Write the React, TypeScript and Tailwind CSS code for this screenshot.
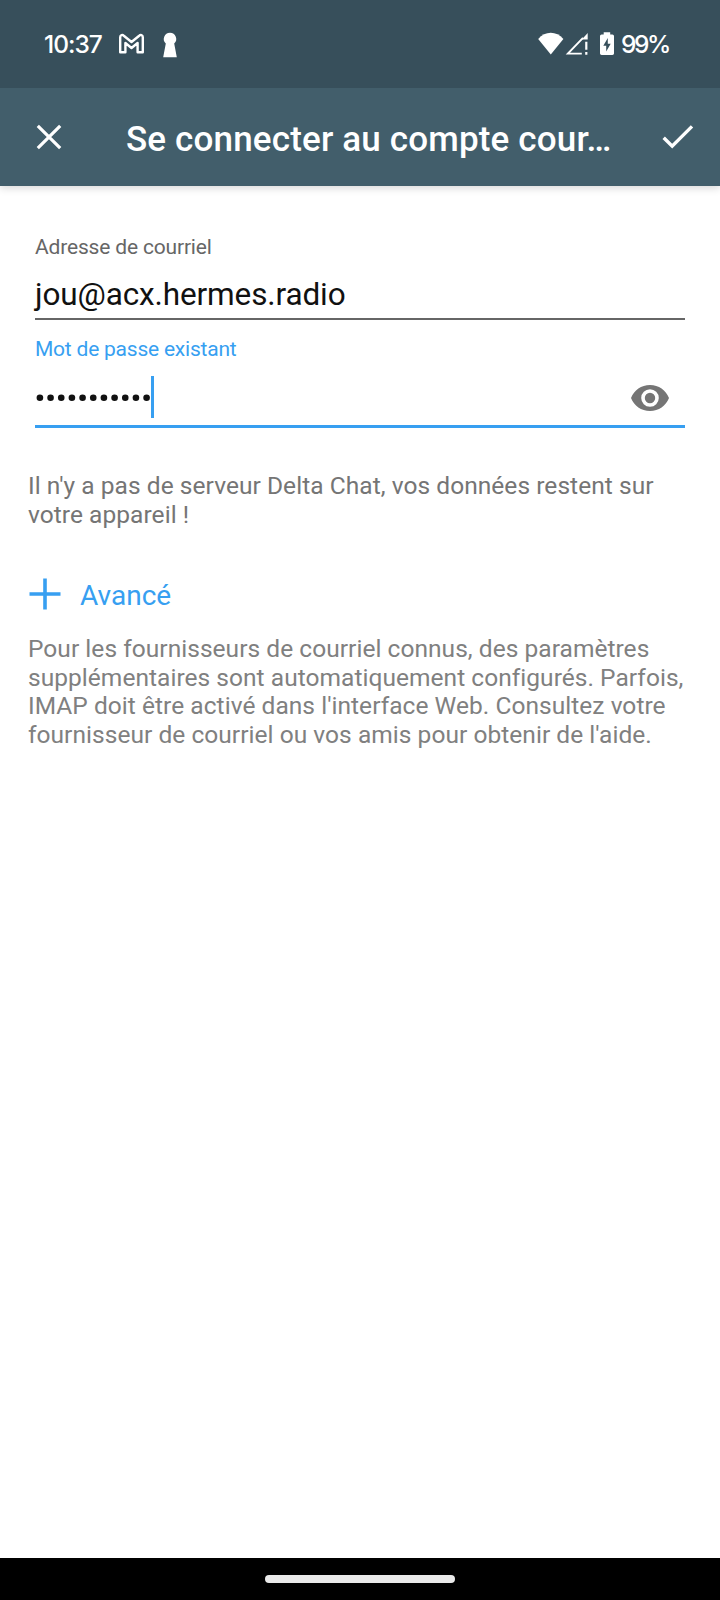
import React from "react";

function StatusBar() {
  return (
    <div className="relative z-10 flex h-[88px] items-center bg-[#374f5b] pl-[44px] pr-[51px] text-white">
      <span className="w-[60px] whitespace-nowrap font-['Inter'] text-[24.5px] font-medium leading-[30px] tracking-[-1px]">10:37</span>
      <svg className="ml-[14px] h-[22px] w-[28px]" viewBox="0 0 28 22" fill="none" stroke="white" strokeWidth="2.4" strokeLinejoin="round">
        <path d="M2.2 19.3V4.2C2.2 2.1 4.4 1.5 5.8 2.7L13.5 9L21.2 2.7C22.6 1.5 24.8 2.1 24.8 4.2V19.3H19.6V10L13.5 15L7.4 10V19.3Z" />
      </svg>
      <svg className="ml-[16px] mt-[1px] h-[26px] w-[16px]" viewBox="0 0 16 26" fill="white">
        <path d="M8 .7A6.3 6.3 0 0 1 12.2 11.6L14.8 25.2H1.2L3.8 11.6A6.3 6.3 0 0 1 8 .7Z" />
      </svg>
      <div className="flex-1" />
      <svg className="h-[26px] w-[28px]" viewBox="0 0 28 26" fill="white">
        <path d="M1.2 8C8-.2 19.5-.2 26.4 8L13.8 23.5Z" />
      </svg>
      <svg className="h-[26px] w-[24px]" viewBox="0 0 24 26" fill="none" stroke="white" strokeWidth="1.9">
        <path d="M16.8 22.6H2.9L18 6.8" />
        <path d="M16.8 8.6L22.7 2V8.6Z" fill="white" stroke="none" />
        <path d="M21.3 10.8V18.7M21.3 21V23.7" strokeWidth="2.2" />
      </svg>
      <svg className="ml-[10px] h-[26px] w-[16px]" viewBox="0 0 16 26">
        <path fill="white" fillRule="evenodd" d="M4.7 1.2H11.2V3.4H13.4Q15 3.4 15 5V22.6Q15 24 13.4 24H2.6Q1 24 1 22.6V5Q1 3.4 2.6 3.4H4.7ZM8.8 7L4.3 14.8H7.2V20.4L11.7 12.7H8.8Z" />
      </svg>
      <span className="ml-[6px] w-[48px] whitespace-nowrap font-['Inter'] text-[24.5px] font-medium leading-[30px] tracking-[-2.4px]">99%</span>
    </div>
  );
}

function AppBar() {
  return (
    <header className="flex h-[98px] items-center bg-[#425e6b] pl-[36px] text-white shadow-[0_2px_8px_rgba(0,0,0,0.16)]">
      <svg className="h-[26px] w-[26px]" viewBox="0 0 26 26" fill="none" stroke="white" strokeWidth="3.2">
        <path d="M1.8 1.8L24.2 24.2M24.2 1.8L1.8 24.2" />
      </svg>
      <h1 className="ml-[64px] w-[486px] whitespace-nowrap pt-[6px] text-[35px] font-medium leading-[42px] tracking-[0.16px]">Se connecter au compte cour…</h1>
      <svg className="ml-[50px] h-[24px] w-[32px]" viewBox="0 0 32 24" fill="none" stroke="white" strokeWidth="3.4">
        <path d="M1.7 12.7L10.2 21.2L30 1.4" />
      </svg>
    </header>
  );
}

export default function App() {
  return (
    <div className="flex h-[1600px] w-[720px] flex-col overflow-hidden bg-white font-['Roboto',sans-serif]">
      <StatusBar />
      <AppBar />
      <main className="flex flex-1 flex-col px-[28px] pt-[48px]">
        <section className="flex flex-col px-[7px]">
          <label className="h-[26px] whitespace-nowrap text-[21px] leading-[26px] tracking-[-0.17px] text-[#666666]">Adresse de courriel</label>
          <div className="mt-[14px] h-[46px] whitespace-nowrap border-b-2 border-[#666666] text-[31.5px] leading-[42px] tracking-[-0.12px] text-[#111111]">jou@acx.hermes.radio</div>
          <label className="mt-[16px] h-[26px] whitespace-nowrap text-[21px] leading-[26px] tracking-[-0.22px] text-[#379ff1]">Mot de passe existant</label>
          <div className="mt-[9px] flex h-[57px] items-center justify-between border-b-[3px] border-[#379ff1] pr-[15px]">
            <div className="flex items-center">
              <svg className="h-[10px] w-[116px]" viewBox="0 0 116 10" fill="#111111">
                {Array.from({ length: 11 }, (_, i) => (
                  <circle key={i} cx={4.9 + i * 10.67} cy={4.8} r={3.3} />
                ))}
              </svg>
              <span className="mb-[2px] h-[42px] w-[3px] bg-[#379ff1]" />
            </div>
            <svg className="h-[28px] w-[40px]" viewBox="0 0 40 28">
              <path fill="#757575" fillRule="evenodd" d="M20 1C11.3 1 4 6.3 1 14C4 21.7 11.3 27 20 27S36 21.7 39 14C36 6.3 28.7 1 20 1ZM20 22.8A8.8 8.8 0 1 1 20 5.2A8.8 8.8 0 0 1 20 22.8ZM20 8.8A5.2 5.2 0 1 0 20 19.2A5.2 5.2 0 0 0 20 8.8Z" />
            </svg>
          </div>
        </section>
        <p className="mt-[44px] whitespace-nowrap text-[24.5px] leading-[28.6px] tracking-[0.05px] text-[#757575]">
          Il n'y a pas de serveur Delta Chat, vos données restent sur<br />votre appareil !
        </p>
        <div className="mt-[44px] flex h-[42px] items-center text-[#379ff1]">
          <svg className="ml-[1px] h-[32px] w-[32px]" viewBox="0 0 32 32" fill="none" stroke="currentColor" strokeWidth="3.6">
            <path d="M.5 16H31.5M16 .5V31.5" />
          </svg>
          <span className="ml-[19px] pt-[3px] text-[28px] leading-[36px]">Avancé</span>
        </div>
        <p className="mt-[20px] whitespace-nowrap text-[24.5px] leading-[28.6px] tracking-[0.04px] text-[#808080]">
          Pour les fournisseurs de courriel connus, des paramètres<br />
          supplémentaires sont automatiquement configurés. Parfois,<br />
          IMAP doit être activé dans l'interface Web. Consultez votre<br />
          fournisseur de courriel ou vos amis pour obtenir de l'aide.
        </p>
      </main>
      <footer className="flex h-[42px] items-center justify-center bg-black">
        <div className="h-[8px] w-[190px] rounded-full bg-[#eaeaea]" />
      </footer>
    </div>
  );
}
